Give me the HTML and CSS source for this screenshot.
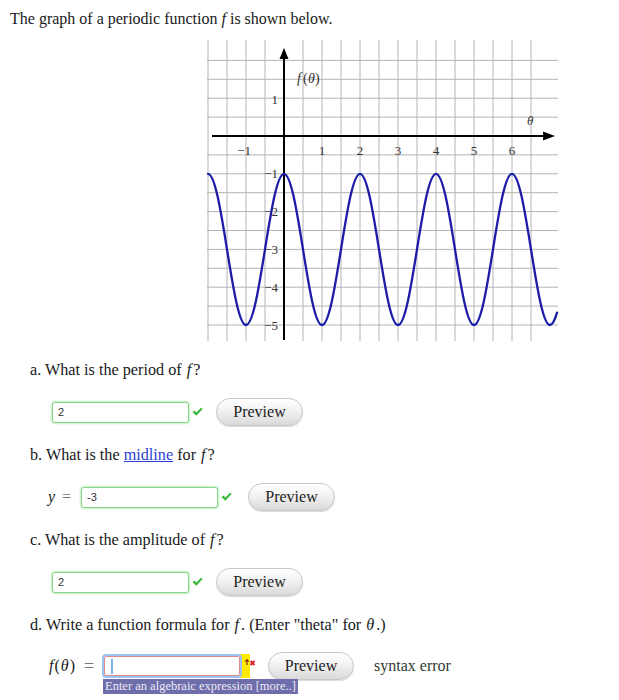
FILE: index.html
```html
<!DOCTYPE html>
<html>
<head>
<meta charset="utf-8">
<link rel="stylesheet" href="styles.css">
</head>
<body>
<p class="title">The graph of a periodic function <i>f</i> is shown below.</p>
<svg class="graph" width="360" height="307" viewBox="200 38 360 307" xmlns="http://www.w3.org/2000/svg">
  <g stroke="#b4b4b4" stroke-width="1">
    <line x1="208" y1="40" x2="208" y2="341"/>
    <line x1="227" y1="40" x2="227" y2="341"/>
    <line x1="246" y1="40" x2="246" y2="341"/>
    <line x1="265" y1="40" x2="265" y2="341"/>
    <line x1="303" y1="40" x2="303" y2="341"/>
    <line x1="322" y1="40" x2="322" y2="341"/>
    <line x1="341" y1="40" x2="341" y2="341"/>
    <line x1="360" y1="40" x2="360" y2="341"/>
    <line x1="379" y1="40" x2="379" y2="341"/>
    <line x1="398" y1="40" x2="398" y2="341"/>
    <line x1="417" y1="40" x2="417" y2="341"/>
    <line x1="436" y1="40" x2="436" y2="341"/>
    <line x1="455" y1="40" x2="455" y2="341"/>
    <line x1="474" y1="40" x2="474" y2="341"/>
    <line x1="493" y1="40" x2="493" y2="341"/>
    <line x1="512" y1="40" x2="512" y2="341"/>
    <line x1="531" y1="40" x2="531" y2="341"/>
    <line x1="207" y1="60.4" x2="558" y2="60.4"/>
    <line x1="207" y1="79.3" x2="558" y2="79.3"/>
    <line x1="207" y1="98.2" x2="558" y2="98.2"/>
    <line x1="207" y1="117.1" x2="558" y2="117.1"/>
    <line x1="207" y1="154.9" x2="558" y2="154.9"/>
    <line x1="207" y1="173.8" x2="558" y2="173.8"/>
    <line x1="207" y1="192.7" x2="558" y2="192.7"/>
    <line x1="207" y1="211.6" x2="558" y2="211.6"/>
    <line x1="207" y1="230.5" x2="558" y2="230.5"/>
    <line x1="207" y1="249.4" x2="558" y2="249.4"/>
    <line x1="207" y1="268.3" x2="558" y2="268.3"/>
    <line x1="207" y1="287.2" x2="558" y2="287.2"/>
    <line x1="207" y1="306.1" x2="558" y2="306.1"/>
    <line x1="207" y1="325" x2="558" y2="325"/>
  </g>
  <g stroke="#000" stroke-width="2">
    <line x1="212" y1="136" x2="545" y2="136"/>
    <line x1="284" y1="57" x2="284" y2="340"/>
  </g>
  <polygon points="284,48 279.5,59 288.5,59" fill="#000"/>
  <polygon points="555,136 543,131.5 543,140.5" fill="#000"/>
  <path fill="none" stroke="#1c1ca8" stroke-width="2.3" stroke-linecap="round"
    d="M208,173.8
       c6.886,0 12.804,36.87 19,75.6 c6.196,38.73 12.114,75.6 19,75.6 c6.886,0 12.804,-36.87 19,-75.6 c6.196,-38.73 12.114,-75.6 19,-75.6
       c6.886,0 12.804,36.87 19,75.6 c6.196,38.73 12.114,75.6 19,75.6 c6.886,0 12.804,-36.87 19,-75.6 c6.196,-38.73 12.114,-75.6 19,-75.6
       c6.886,0 12.804,36.87 19,75.6 c6.196,38.73 12.114,75.6 19,75.6 c6.886,0 12.804,-36.87 19,-75.6 c6.196,-38.73 12.114,-75.6 19,-75.6
       c6.886,0 12.804,36.87 19,75.6 c6.196,38.73 12.114,75.6 19,75.6 c6.886,0 12.804,-36.87 19,-75.6 c6.196,-38.73 12.114,-75.6 19,-75.6
       c6.886,0 12.804,36.87 19,75.6 c6.196,38.73 12.114,75.6 19,75.6 c2.4,0 4.7,-4.5 7,-12.3"/>
  <g class="lbl">
    <text x="297" y="83" class="it big">f</text>
    <text x="303" y="83" class="big">(</text>
    <text x="308" y="83" class="it big">θ</text>
    <text x="315" y="83" class="big">)</text>
    <text x="278" y="103.5" text-anchor="end">1</text>
    <text x="527" y="125" class="it">θ</text>
    <text x="251" y="155" text-anchor="end">−1</text>
    <text x="322" y="155" text-anchor="middle">1</text>
    <text x="360" y="155" text-anchor="middle">2</text>
    <text x="398" y="155" text-anchor="middle">3</text>
    <text x="436" y="155" text-anchor="middle">4</text>
    <text x="474" y="155" text-anchor="middle">5</text>
    <text x="512" y="155" text-anchor="middle">6</text>
    <text x="278" y="178" text-anchor="end">−1</text>
    <text x="278" y="216" text-anchor="end">−2</text>
    <text x="278" y="254" text-anchor="end">−3</text>
    <text x="278" y="292" text-anchor="end">−4</text>
    <text x="278" y="329.5" text-anchor="end">−5</text>
  </g>
</svg>

<div class="item first">
  <p class="q">a. What is the period of <i>f</i>?</p>
  <div class="row row-a">
    <div class="field ok"><span class="val">2</span></div>
    <svg class="check" width="11" height="10" viewBox="0 0 11 10"><path d="M0.5,5.2 L2.6,3.4 L4.4,5.4 L9.2,0.6 L10.6,2 L4.4,8.8 Z" fill="#3fb83f"/></svg>
    <button class="preview">Preview</button>
  </div>
</div>

<div class="item">
  <p class="q">b. What is the <a class="link" href="#">midline</a> for <i>f</i>?</p>
  <div class="row row-b">
    <span class="math"><i>y</i><span class="eq">=</span></span>
    <div class="field ok"><span class="val">-3</span></div>
    <svg class="check" width="11" height="10" viewBox="0 0 11 10"><path d="M0.5,5.2 L2.6,3.4 L4.4,5.4 L9.2,0.6 L10.6,2 L4.4,8.8 Z" fill="#3fb83f"/></svg>
    <button class="preview">Preview</button>
  </div>
</div>

<div class="item">
  <p class="q">c. What is the amplitude of <i>f</i>?</p>
  <div class="row row-a">
    <div class="field ok"><span class="val">2</span></div>
    <svg class="check" width="11" height="10" viewBox="0 0 11 10"><path d="M0.5,5.2 L2.6,3.4 L4.4,5.4 L9.2,0.6 L10.6,2 L4.4,8.8 Z" fill="#3fb83f"/></svg>
    <button class="preview">Preview</button>
  </div>
</div>

<div class="item last">
  <p class="q">d. Write a function formula for <i>f</i>. (Enter "theta" for <i>θ</i>.)</p>
  <div class="row row-d">
    <span class="math"><i>f</i>(<i>θ</i>)<span class="eq">=</span></span>
    <div class="field-wrap">
      <div class="field err"><span class="caret"></span></div>
      <div class="tip">Enter an algebraic expression [more..]</div>
    </div>
    <svg class="warn" width="16" height="24" viewBox="0 0 16 24">
      <rect x="0" y="0" width="10" height="24" fill="#ffea00"/>
      <path d="M7,11 L7,6 M5.3,7.6 L7,5.6 L8.7,7.6" stroke="#8a2a10" stroke-width="1.2" fill="none"/>
      <path d="M10.5,7 L14.5,11 M14.5,7 L10.5,11" stroke="#d42020" stroke-width="1.8"/>
    </svg>
    <button class="preview">Preview</button>
    <span class="status">syntax error</span>
  </div>
</div>
</body>
</html>
```
FILE: styles.css
```css
body {
  margin: 0;
  font-family: "Liberation Serif", "Times New Roman", serif;
  color: #1a1a1a;
  background: #fff;
}
p { margin: 0; }
.title {
  padding: 10px 0 0 10px;
  font-size: 16px;
  line-height: 18px;
}
.graph {
  display: block;
  margin: 10px 0 0 200px;
}
.lbl text {
  font-family: "Liberation Serif", "Times New Roman", serif;
  font-size: 13px;
  fill: #333;
}
.lbl text.big { font-size: 14px; }
.lbl text.it { font-style: italic; }
.item { margin-top: 19px; }
.item.first { margin-top: 15px; }
.item.last { padding-bottom: 20px; }
.q {
  margin-left: 30px;
  font-size: 16.2px;
  line-height: 20px;
}
.q i { padding: 0 2px 0 1px; }
.link { color: #2b3fd1; }
.row {
  display: flex;
  align-items: center;
  height: 28px;
  margin-top: 18px;
}
.row-a { padding-left: 52px; }
.row-b { padding-left: 48px; }
.row-d { padding-left: 48px; margin-top: 17px; }
.math {
  font-size: 16px;
  display: flex;
  align-items: center;
}
.eq {
  color: #777;
  margin-left: 7px;
}
.row-b .math { width: 33px; }
.row-d .math { width: 54px; }
.row-d .math i { padding: 0 1px; }
.row-d .eq { font-size: 18px; margin-left: 9px; }
.field {
  box-sizing: border-box;
  width: 137px;
  height: 21px;
  border-radius: 3px;
  background: #fff;
  display: flex;
  align-items: center;
}
.field.ok {
  border: 1px solid #86d686;
  box-shadow: 0 0 2px 1px #c6efc6;
}
.val {
  font-family: "Liberation Sans", Arial, sans-serif;
  font-size: 11px;
  color: #333;
  padding-left: 5px;
}
.check { margin-left: 3px; }
.row-a .preview { margin-left: 13px; }
.row-b .preview { margin-left: 16px; }
.preview {
  box-sizing: border-box;
  width: 87px;
  height: 28px;
  border: 1px solid #c8c8c8;
  border-radius: 14px;
  background: linear-gradient(#ffffff, #f2f2f2 45%, #d9d9d9);
  box-shadow: 0 1px 1px rgba(0,0,0,0.15);
  font-family: "Liberation Serif", "Times New Roman", serif;
  font-size: 16px;
  color: #222;
  padding: 0;
}
.field-wrap { position: relative; }
.field.err {
  width: 140px;
  height: 24px;
  border: 2px solid #9cc3ef;
  border-radius: 4px;
  box-shadow: inset 0 0 0 1px #e48a8a;
  padding-left: 7px;
}
.caret {
  display: block;
  width: 2px;
  height: 15px;
  background: #7fb3ea;
}
.tip {
  position: absolute;
  z-index: 2;
  left: 1px;
  top: 25px;
  white-space: nowrap;
  background: #6e6eab;
  color: #ecebf4;
  font-size: 12.5px;
  line-height: 15px;
  padding: 0 2px;
}
.warn { margin-left: -2px; }
.row-d .preview { margin-left: 12px; width: 86px; }
.status {
  margin-left: 20px;
  font-size: 16px;
  color: #2f3a30;
}
```
